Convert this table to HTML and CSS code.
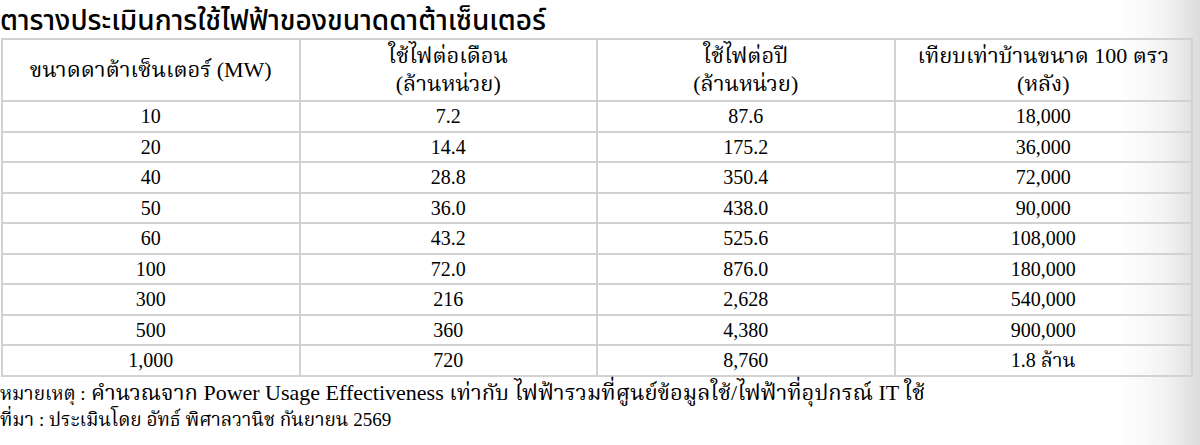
FILE: index.html
```html
<!DOCTYPE html>
<html lang="th">
<head>
<meta charset="utf-8">
<title>ตารางประเมินการใช้ไฟฟ้าของขนาดดาต้าเซ็นเตอร์</title>
<link rel="stylesheet" href="styles.css">
</head>
<body>
<div class="page">
  <h1 class="title">ตารางประเมินการใช้ไฟฟ้าของขนาดดาต้าเซ็นเตอร์</h1>
  <table class="usage">
    <thead>
      <tr>
        <th>ขนาดดาต้าเซ็นเตอร์ (MW)</th>
        <th>ใช้ไฟต่อเดือน<br>(ล้านหน่วย)</th>
        <th>ใช้ไฟต่อปี<br>(ล้านหน่วย)</th>
        <th>เทียบเท่าบ้านขนาด 100 ตรว<br>(หลัง)</th>
      </tr>
    </thead>
    <tbody>
      <tr><td>10</td><td>7.2</td><td>87.6</td><td>18,000</td></tr>
      <tr><td>20</td><td>14.4</td><td>175.2</td><td>36,000</td></tr>
      <tr><td>40</td><td>28.8</td><td>350.4</td><td>72,000</td></tr>
      <tr><td>50</td><td>36.0</td><td>438.0</td><td>90,000</td></tr>
      <tr><td>60</td><td>43.2</td><td>525.6</td><td>108,000</td></tr>
      <tr><td>100</td><td>72.0</td><td>876.0</td><td>180,000</td></tr>
      <tr><td>300</td><td>216</td><td>2,628</td><td>540,000</td></tr>
      <tr><td>500</td><td>360</td><td>4,380</td><td>900,000</td></tr>
      <tr><td>1,000</td><td>720</td><td>8,760</td><td>1.8 ล้าน</td></tr>
    </tbody>
  </table>
  <p class="note"><span class="label">หมายเหตุ :</span> คำนวณจาก Power Usage Effectiveness เท่ากับ ไฟฟ้ารวมที่ศูนย์ข้อมูลใช้/ไฟฟ้าที่อุปกรณ์ IT ใช้</p>
  <p class="source">ที่มา : ประเมินโดย อัทธ์ พิศาลวานิช กันยายน 2569</p>
</div>
</body>
</html>
```

FILE: styles.css
```css
html, body {
  margin: 0;
  padding: 0;
}

body {
  width: 1200px;
  height: 445px;
  overflow: hidden;
  background: linear-gradient(to right, #ffffff 0, #ffffff 1120px, #f3f3f3 1165px, #dcdcdc 1200px);
  color: #000;
  font-family: "Liberation Serif", "Noto Serif Thai", "Tlwg Typo", "Norasi", serif;
}

.page {
  display: flex;
  flex-direction: column;
  padding-top: 4px;
}

.title {
  margin: 0;
  font-family: "Liberation Sans", "Noto Sans Thai", "Loma", "Garuda", sans-serif;
  font-size: 28px;
  font-weight: 500;
  line-height: 34px;
}

.usage {
  margin-left: 1px;
  width: 1192px;
  border-collapse: collapse;
  table-layout: fixed;
  font-size: 20px;
}

.usage th,
.usage td {
  border: 2px solid #d2d2d2;
  text-align: center;
  padding: 0;
}

.usage th {
  font-weight: normal;
  font-size: 22px;
  height: 60px;
  line-height: 28px;
}

.usage td {
  height: 28.5px;
  line-height: 24px;
}

.note {
  margin: 2px 0 0;
  font-size: 22px;
  line-height: 28px;
}

.note .label {
  font-size: 19px;
}

.source {
  margin: 0;
  font-size: 19px;
  line-height: 24px;
}
```
